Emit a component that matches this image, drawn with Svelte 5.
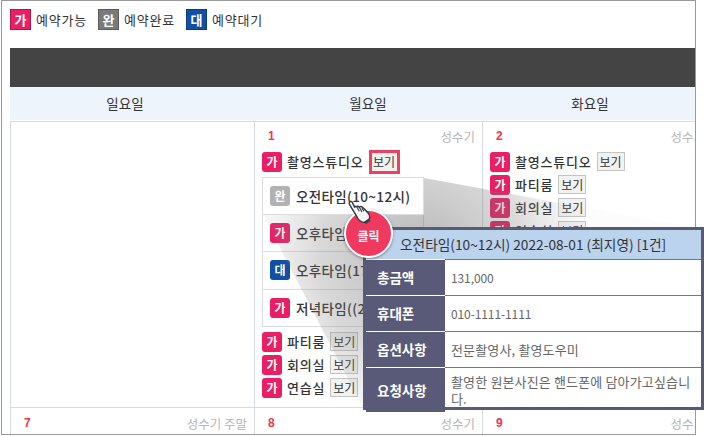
<script>
  const legend = [
    { kind: 'open', mark: '가', label: '예약가능' },
    { kind: 'done', mark: '완', label: '예약완료' },
    { kind: 'wait', mark: '대', label: '예약대기' },
  ];

  const slots = [
    { kind: 'done', mark: '완', label: '오전타임(10~12시)', top: true },
    { kind: 'open', mark: '가', label: '오후타임(13~16시)' },
    { kind: 'wait', mark: '대', label: '오후타임(17~19시)' },
    { kind: 'open', mark: '가', label: '저녁타임((20~22시)' },
  ];

  const details = [
    { head: '총금액', value: '131,000', num: true },
    { head: '휴대폰', value: '010-1111-1111', num: true },
    { head: '옵션사항', value: '전문촬영사, 촬영도우미' },
    { head: '요청사항', value: '촬영한 원본사진은 핸드폰에 담아가고싶습니다.', tall: true },
  ];
</script>

<div class="page">
  <div class="frame">
    <!-- Legend -->
    <div class="legend">
      {#each legend as item}
        <span class="legend-item">
          <span class="legend-mark {item.kind}">{item.mark}</span>{item.label}
        </span>
      {/each}
    </div>

    <div class="title-bar"></div>

    <div class="week-head">
      <span>일요일</span>
      <span>월요일</span>
      <span>화요일</span>
    </div>

    <!-- Calendar -->
    <div class="week first">
      <div class="cell"></div>

      <div class="cell">
        <div class="day-line"><b>1</b><em>성수기</em></div>
        <div class="room">
          <span class="mark open">가</span>촬영스튜디오<span class="view hot">보기</span>
        </div>
        <div class="slots">
          {#each slots as slot}
            <div class="slot" class:top={slot.top}>
              <span class="mark {slot.kind}" class:soft={slot.kind === 'done'}>{slot.mark}</span>{slot.label}
            </div>
          {/each}
        </div>
        {#each ['파티룸', '회의실', '연습실'] as room}
          <div class="room"><span class="mark open">가</span>{room}<span class="view">보기</span></div>
        {/each}
      </div>

      <div class="cell">
        <div class="day-line"><b>2</b><em>성수기</em></div>
        <div class="room"><span class="mark open">가</span>촬영스튜디오<span class="view">보기</span></div>
        {#each ['파티룸', '회의실', '연습실'] as room}
          <div class="room"><span class="mark open">가</span>{room}<span class="view">보기</span></div>
        {/each}
      </div>
    </div>

    <div class="week">
      <div class="cell"><div class="day-line"><b>7</b><em>성수기 주말</em></div></div>
      <div class="cell"><div class="day-line"><b>8</b><em>성수기</em></div></div>
      <div class="cell"><div class="day-line"><b>9</b><em>성수기</em></div></div>
    </div>
  </div>

  <!-- Wedge joining the slot to its popup -->
  <svg class="wedge" width="706" height="436" viewBox="0 0 706 436" aria-hidden="true">
    <defs>
      <radialGradient id="wedgeFill" gradientUnits="userSpaceOnUse" cx="420" cy="260" r="170">
        <stop offset="0" stop-color="#555" stop-opacity="0.45" />
        <stop offset="0.6" stop-color="#777" stop-opacity="0.28" />
        <stop offset="1" stop-color="#999" stop-opacity="0.03" />
      </radialGradient>
    </defs>
    <polygon points="262,213 424,178 702,229 364,410" fill="url(#wedgeFill)" />
  </svg>

  <!-- Popup -->
  <div class="popup">
    <div class="popup-title">오전타임(10~12시) 2022-08-01 (최지영) [1건]</div>
    {#each details as row}
      <div class="popup-row" class:tall={row.tall}>
        <div class="popup-head">{row.head}</div>
        <div class="popup-value" class:num={row.num}>{row.value}</div>
      </div>
    {/each}
  </div>

  <!-- Click marker -->
  <div class="click">클릭</div>
  <svg class="hand" width="26" height="29" viewBox="0 0 40 44" aria-hidden="true">
    <path d="M5.5 8.5 L13.5 21.5 L16.5 26.5 C18.5 31.5 23.5 36.5 28.5 35.5 L35.5 30.5 C37.5 27.5 35.5 22.5 32.5 19.5 L25.5 12.5 C23.5 10.5 21.5 11.5 20.5 12.5 C19.5 10.5 17.5 10.5 16.5 11.5 C14.5 10.5 13.5 11.5 13.5 12.5 L9.5 4.5 C7.5 1.5 3.5 4.5 5.5 8.5Z" fill="#f4f4f4" stroke="#2f3a44" stroke-width="2.2" stroke-linejoin="round" />
    <path d="M16.5 11.5 L20.5 18.5 M20.5 12.5 L24.5 19.5 M24.5 13.5 L27.5 18.5" fill="none" stroke="#2f3a44" stroke-width="1.6" />
    <path d="M28.5 35.5 L35.5 30.5 L37.5 33.5 L30.5 38.5Z" fill="#39424c" />
  </svg>
</div>

<style>
  :global(body) {
    margin: 0;
    background: #fff;
  }

  .page {
    position: relative;
    width: 706px;
    height: 436px;
    overflow: hidden;
    font-family: "Noto Sans CJK KR", "Noto Sans", sans-serif;
    font-size: 13px;
    color: #333;
  }

  .frame {
    box-sizing: border-box;
    width: 695px;
    height: 435px;
    margin-left: 1px;
    padding: 8px 0 0 8px;
    border: 1px solid #999;
    overflow: hidden;
  }

  /* ── Legend ─────────────────────────────────────────────────────────── */
  .legend {
    display: flex;
    gap: 11px;
    height: 21px;
    margin-bottom: 18px;
  }
  .legend-item {
    display: flex;
    align-items: center;
    gap: 5px;
    font-size: 13px;
    letter-spacing: 0.8px;
    line-height: 21px;
  }
  .legend-mark {
    box-sizing: border-box;
    width: 21px;
    height: 21px;
    border: 1px solid rgba(0, 0, 0, 0.25);
    color: #fff;
    font-size: 13px;
    font-weight: 700;
    letter-spacing: 0;
    line-height: 19px;
    text-align: center;
  }

  .open { background: #e91e63; }
  .done { background: #7a7a7a; }
  .wait { background: #1150a4; }

  .title-bar {
    height: 39px;
    width: 710px;
    background: #444;
  }

  .week-head {
    display: grid;
    grid-template-columns: 230px 256px 188px;
    height: 33px;
    width: 710px;
    margin-bottom: 1px;
    background: #eef4fb;
    font-size: 13.5px;
    line-height: 33px;
    text-align: center;
  }

  /* ── Calendar ───────────────────────────────────────────────────────── */
  .week {
    display: grid;
    grid-template-columns: 244px 228px 230px;
    height: 30px;
    border-top: 1px solid #d5dbe0;
  }
  .week.first {
    height: 285px;
  }

  .cell {
    box-sizing: border-box;
    padding: 0 7px;
    border-left: 1px solid #d5dbe0;
    min-width: 0;
  }

  .day-line {
    display: flex;
    justify-content: space-between;
    height: 30px;
    padding-left: 6px;
    align-items: center;
  }
  .week.first .day-line {
    height: 28px;
  }
  .day-line b {
    color: #f4364c;
    font-family: "Liberation Sans", sans-serif;
    font-size: 12px;
  }
  .day-line em {
    color: #b5b5b5;
    font-style: normal;
    font-size: 12.5px;
  }

  .room {
    display: flex;
    align-items: center;
    gap: 5px;
    height: 23px;
    font-size: 13px;
    font-weight: 500;
    letter-spacing: 0.8px;
    white-space: nowrap;
  }

  .mark {
    flex: none;
    width: 20px;
    height: 20px;
    border-radius: 3px;
    color: #fff;
    font-size: 12px;
    font-weight: 700;
    letter-spacing: 0;
    line-height: 20px;
    text-align: center;
  }
  .mark.soft { background: #b2b2b2; }

  .view {
    box-sizing: border-box;
    width: 28px;
    height: 19px;
    border: 1px solid #c4c4c4;
    background: #f2f2f2;
    font-size: 12px;
    font-weight: 400;
    letter-spacing: 0;
    line-height: 17px;
    text-align: center;
  }
  .view.hot {
    width: 31px;
    height: 24px;
    border: 3px solid #f0405f;
    line-height: 18px;
  }

  .slots {
    margin: 4px 0 3px;
    width: 162px;
  }
  .slot {
    position: relative;
    display: flex;
    align-items: center;
    gap: 6px;
    box-sizing: border-box;
    height: 37.5px;
    padding-left: 7px;
    border: 1px solid #ddd;
    border-top: 0;
    background: #fff;
    font-size: 13.5px;
    font-weight: 500;
    letter-spacing: 0.35px;
    white-space: nowrap;
    overflow: hidden;
  }
  .slot.top {
    border-top: 1px solid #ddd;
    z-index: 2;
  }

  /* ── Overlays ───────────────────────────────────────────────────────── */
  .wedge {
    position: absolute;
    inset: 0;
    z-index: 1;
  }

  .popup {
    position: absolute;
    z-index: 3;
    left: 363px;
    top: 227px;
    box-sizing: border-box;
    width: 341px;
    height: 183px;
    border: 3px solid #585a78;
    background: #fff;
  }
  .popup-title {
    height: 29px;
    padding-left: 34px;
    background: #bcd3ee;
    font-size: 13.7px;
    line-height: 29px;
    white-space: nowrap;
  }
  .popup-row {
    display: grid;
    grid-template-columns: 79px 1fr;
    height: 35px;
    border-top: 1px solid #777;
  }
  .popup-row.tall {
    height: 44px;
  }
  .popup-head {
    padding-left: 11px;
    border-top: 1px solid #fff;
    margin-top: -1px;
    background: #585a78;
    color: #fff;
    font-size: 13.5px;
    font-weight: 700;
    line-height: 35px;
  }
  .popup-row.tall .popup-head {
    line-height: 44px;
  }
  .popup-row:first-of-type .popup-head {
    border-top: 0;
  }
  .popup-value {
    display: flex;
    align-items: center;
    padding: 0 4px 0 6px;
    color: #666;
    font-size: 13px;
    letter-spacing: 0.15px;
    line-height: 17px;
  }
  .popup-value.num {
    font-size: 12px;
    letter-spacing: -0.1px;
  }

  .click {
    position: absolute;
    z-index: 4;
    left: 344px;
    top: 209px;
    box-sizing: border-box;
    width: 49px;
    height: 49px;
    border: 2px solid #fff;
    border-radius: 50%;
    background: #f0395f;
    box-shadow: 0 1px 3px rgba(0, 0, 0, 0.4);
    color: #fff;
    font-size: 12px;
    font-weight: 700;
    line-height: 50px;
    text-align: center;
  }

  .hand {
    position: absolute;
    z-index: 5;
    left: 346px;
    top: 199px;
  }
</style>
